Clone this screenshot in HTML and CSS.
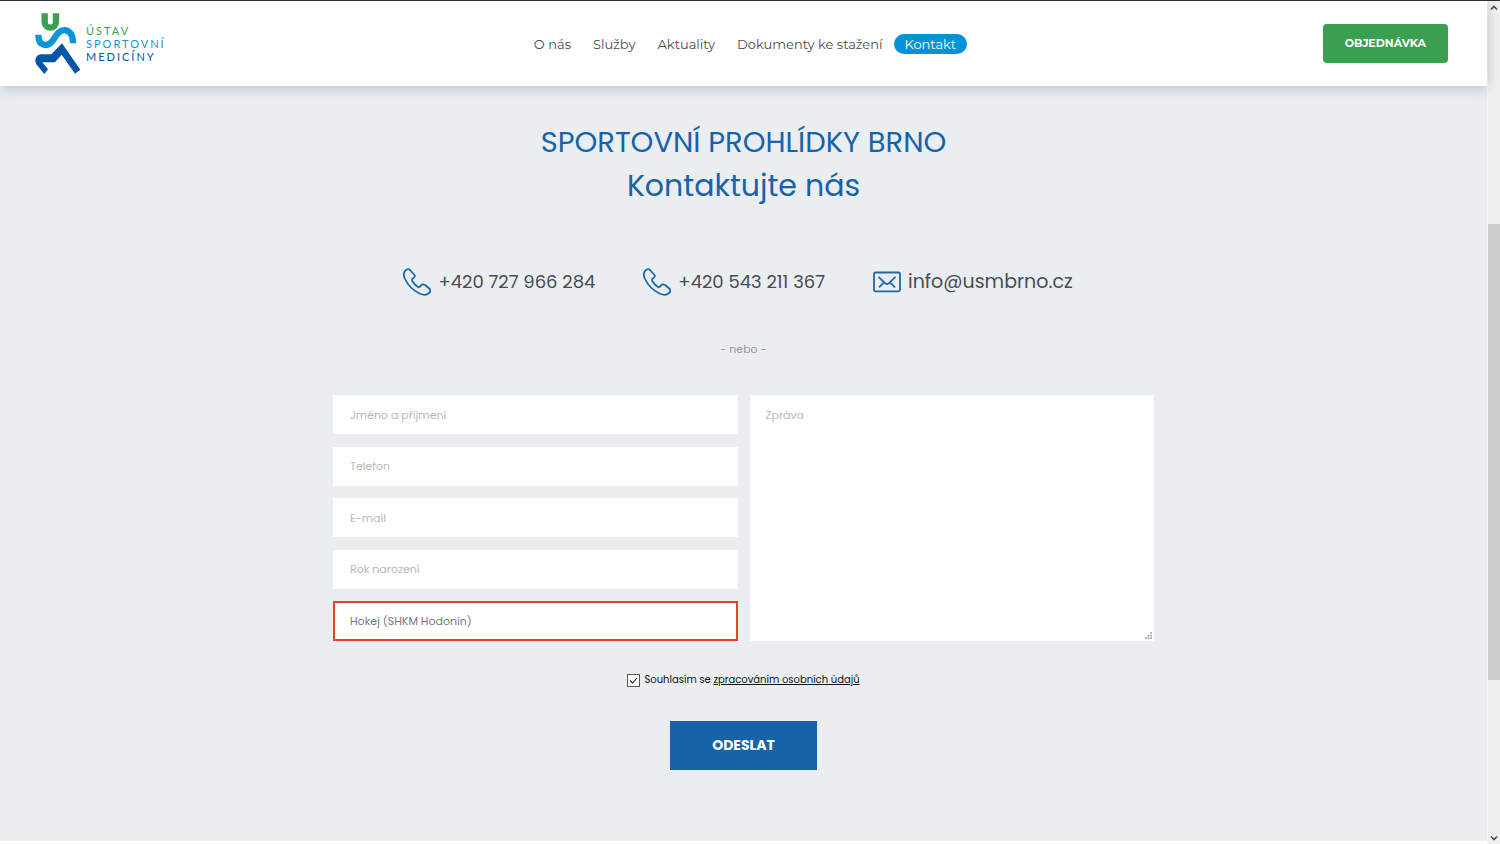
FILE: index.html
```html
<!DOCTYPE html>
<html lang="cs">
<head>
<meta charset="utf-8">
<meta name="viewport" content="width=device-width, initial-scale=1">
<title>Kontakt – Ústav sportovní medicíny</title>
<link rel="stylesheet" href="styles.css">
</head>
<body>
<div class="page">
  <header class="header">
    <a class="logo" href="#">
      <svg class="logo-mark" viewBox="42 36 144 189" aria-hidden="true">
        <path d="M74 40V66a17 17 0 0 0 34 0V40" fill="none" stroke="#3c9f50" stroke-width="19"/>
        <path d="M55 104C55 140 84 143 99 121C110 103 120 87 138 91C153 95 159 108 159 130" fill="none" stroke="#0a94d9" stroke-width="19"/>
        <path d="M62 163H94L126 130L181 209L165 221L125 164L105 187H67L84 208L73 222L50 194C42 182 46 166 62 163Z" fill="#0455a6"/>
      </svg>
      <span class="logo-text">
        <span class="logo-green">ÚSTAV</span>
        <span class="logo-sky">SPORTOVNÍ</span>
        <span class="logo-navy">MEDICÍNY</span>
      </span>
    </a>
    <nav class="nav">
      <a href="#">O nás</a>
      <a href="#">Služby</a>
      <a href="#">Aktuality</a>
      <a href="#">Dokumenty ke stažení</a>
      <a class="active" href="#">Kontakt</a>
    </nav>
    <a class="order" href="#">OBJEDNÁVKA</a>
  </header>
  <main class="contact">
    <h1 class="title">SPORTOVNÍ PROHLÍDKY BRNO<br><span class="subtitle">Kontaktujte nás</span></h1>
    <div class="channels">
      <a class="channel" href="tel:+420727966284">
        <svg class="icon" viewBox="0 0 28 28" aria-hidden="true"><path d="M2 3C4 1 5.500 .5 7 2L11.500 7C12.500 8.500 11.500 9.500 10 10.500C8.500 11.500 8.500 12 9.500 13.500C11 16 13 18 15.500 19.200C16.800 19.700 17 18.500 18 17.300C19.300 16 20.500 16 22 17L26.500 20.800C28 22.300 27.500 23.500 26 25C23.500 27.500 20.500 27.500 16.500 25.500C10.500 22.500 4.500 16.500 1.800 10.500C.5 7.500 .5 5 2 3Z"/></svg>
        <span>+420 727 966 284</span>
      </a>
      <a class="channel" href="tel:+420543211367">
        <svg class="icon" viewBox="0 0 28 28" aria-hidden="true"><path d="M2 3C4 1 5.500 .5 7 2L11.500 7C12.500 8.500 11.500 9.500 10 10.500C8.500 11.500 8.500 12 9.500 13.500C11 16 13 18 15.500 19.200C16.800 19.700 17 18.500 18 17.300C19.300 16 20.500 16 22 17L26.500 20.800C28 22.300 27.500 23.500 26 25C23.500 27.500 20.500 27.500 16.500 25.500C10.500 22.500 4.500 16.500 1.800 10.500C.5 7.500 .5 5 2 3Z"/></svg>
        <span>+420 543 211 367</span>
      </a>
      <a class="channel mail" href="mailto:info@usmbrno.cz">
        <svg class="icon" viewBox="0 0 28 28" aria-hidden="true"><rect x="1" y="4.500" width="26" height="18.800" rx="1.500"/><path d="M6 9.300L12.300 15.300Q14 16.800 15.700 15.300L22 9.300M6.500 18.800L11 14.300M21.500 18.800L17 14.300"/></svg>
        <span>info@usmbrno.cz</span>
      </a>
    </div>
    <p class="or">- nebo -</p>
    <form class="form">
      <div class="fields">
        <div class="column">
          <input class="field" type="text" placeholder="Jméno a příjmení" aria-label="Jméno a příjmení">
          <input class="field" type="tel" placeholder="Telefon" aria-label="Telefon">
          <input class="field" type="email" placeholder="E-mail" aria-label="E-mail">
          <input class="field" type="text" placeholder="Rok narození" aria-label="Rok narození">
          <input class="field invalid" type="text" value="Hokej (SHKM Hodonín)" aria-label="Sport">
        </div>
        <div class="message-box">
          <textarea class="field message" placeholder="Zpráva" aria-label="Zpráva"></textarea>
          <svg class="grip" viewBox="0 0 8 8" aria-hidden="true"><path d="M6 0h2v2H6zM3 3h2v2H3zM6 3h2v2H6zM0 6h2v2H0zM3 6h2v2H3zM6 6h2v2H6z"/></svg>
        </div>
      </div>
      <div class="consent">
        <input class="check" type="checkbox" id="consent" checked>
        <label for="consent">Souhlasím se <a href="#">zpracováním osobních údajů</a></label>
      </div>
      <button class="submit" type="button">ODESLAT</button>
    </form>
  </main>
</div>
<div class="scrollbar" aria-hidden="true">
  <svg class="arrow" viewBox="0 0 8 8"><path d="M1 5.500L4 2.500L7 5.500"/></svg>
  <div class="track"><div class="thumb"></div></div>
  <svg class="arrow" viewBox="0 0 8 8"><path d="M1 2.500L4 5.500L7 2.500"/></svg>
</div>
</body>
</html>
```
FILE: styles.css
```css
* { box-sizing: border-box; }

body {
  margin: 0;
  min-height: 100vh;
  display: grid;
  grid-template-columns: 1fr 13px;
  border-top: 1px solid #312f33;
  background: #fff;
  font-family: Poppins, Inter, sans-serif;
  color: #474d54;
}

a { color: inherit; text-decoration: none; }

.page {
  display: flex;
  flex-direction: column;
  padding-bottom: 3px;
}

.header {
  position: relative;
  z-index: 1;
  display: grid;
  grid-template-columns: 1fr auto 1fr;
  align-items: center;
  min-height: 85px;
  padding: 0 39px 0 34px;
  background: #fff;
  box-shadow: 0 2px 12px rgba(40, 50, 60, 0.25);
}

.logo { display: flex; align-items: center; gap: 4px; }
.logo-mark { width: 48px; height: 63px; }
.logo-text {
  display: flex;
  flex-direction: column;
  font: 11px/13px Lato, sans-serif;
  letter-spacing: 2px;
}
.logo-green { color: #3c9f50; }
.logo-sky { color: #0a94d9; }
.logo-navy { color: #0455a6; }

.nav {
  display: flex;
  margin-left: 8px;
  font: 13px/20px Montserrat, "Open Sans", sans-serif;
  color: #4a4a4a;
}
.nav a { padding: 0 11px; border-radius: 10px; }
.nav .active { background: #0692d8; color: #fff; }

.order {
  justify-self: end;
  padding: 0 22px;
  border-radius: 4px;
  background: #3b9f52;
  color: #fff;
  font: bold 11px/39px Montserrat, "Open Sans", sans-serif;
}

.contact {
  flex: 1;
  display: flex;
  flex-direction: column;
  align-items: center;
  padding: 34px 20px 68px;
  background: #eaeef1;
}

.title {
  margin: 0;
  font-size: 29px;
  line-height: 44px;
  font-weight: 400;
  text-align: center;
  color: #1863a7;
}
.subtitle { font-size: 30px; }

.channels {
  display: flex;
  flex-wrap: wrap;
  justify-content: center;
  gap: 48px;
  margin-top: 57px;
  padding-right: 11px;
  font-size: 18px;
  line-height: 34px;
}
.channel { display: flex; align-items: center; gap: 7px; }
.mail { font-size: 19px; }
.icon {
  width: 28px;
  height: 28px;
  fill: none;
  stroke: #1c68ae;
  stroke-width: 1.8;
  stroke-linecap: round;
  stroke-linejoin: round;
}

.or {
  margin: 40px 0 36px;
  font-size: 11px;
  line-height: 20px;
  color: #969a9e;
}

.form {
  display: flex;
  flex-direction: column;
  align-items: center;
  width: 100%;
  max-width: 821px;
}
.fields {
  display: grid;
  grid-template-columns: 1fr 1fr;
  gap: 12px;
  width: 100%;
}
.column {
  display: flex;
  flex-direction: column;
  justify-content: space-between;
}
.field {
  display: block;
  width: 100%;
  min-height: 39px;
  padding: 8px 17px;
  border: 0;
  border-radius: 0;
  outline: 0;
  background: #fff;
  font: 11px/20px Poppins, Inter, sans-serif;
  color: #74797d;
}
.field::placeholder { color: #b8b8b8; opacity: 1; }
.invalid { min-height: 40px; padding: 8px 15px; border: 2px solid #e2432d; }
.message-box { position: relative; display: flex; }
.message { min-height: 246px; padding: 10px 16px; resize: none; }
.grip {
  position: absolute;
  right: 2px;
  bottom: 2px;
  width: 7px;
  height: 7px;
  fill: #a9a9a9;
}

.consent {
  display: flex;
  align-items: center;
  gap: 4px;
  margin-top: 28px;
  font-size: 10px;
  line-height: 22px;
  color: #111;
}
.consent a { text-decoration: underline; }
.check {
  appearance: none;
  width: 13px;
  height: 13px;
  margin: 0;
  border: 1px solid #555;
  background: #fff url("data:image/svg+xml,%3Csvg xmlns='http://www.w3.org/2000/svg' viewBox='0 0 11 11'%3E%3Cpath d='M2 5.500L4.500 8L9 3' fill='none' stroke='%23222' stroke-width='1.100'/%3E%3C/svg%3E");
}

.submit {
  margin-top: 30px;
  padding: 0 42px;
  border: 0;
  background: #1863a7;
  color: #fff;
  font: bold 14px/49px Poppins, Inter, sans-serif;
}

.scrollbar {
  display: flex;
  flex-direction: column;
  align-items: center;
  padding: 3px 0 2px;
  border-left: 1px solid #f8f8f8;
  background: #f0f0f0;
}
.arrow {
  width: 8px;
  height: 8px;
  fill: none;
  stroke: #4c4c4c;
  stroke-width: 1.6;
}
.track {
  flex: 1;
  width: 100%;
  display: grid;
  grid-template-rows: 212fr 457fr 154fr;
}
.thumb { grid-row: 2; background: #cbcbcb; }
```
